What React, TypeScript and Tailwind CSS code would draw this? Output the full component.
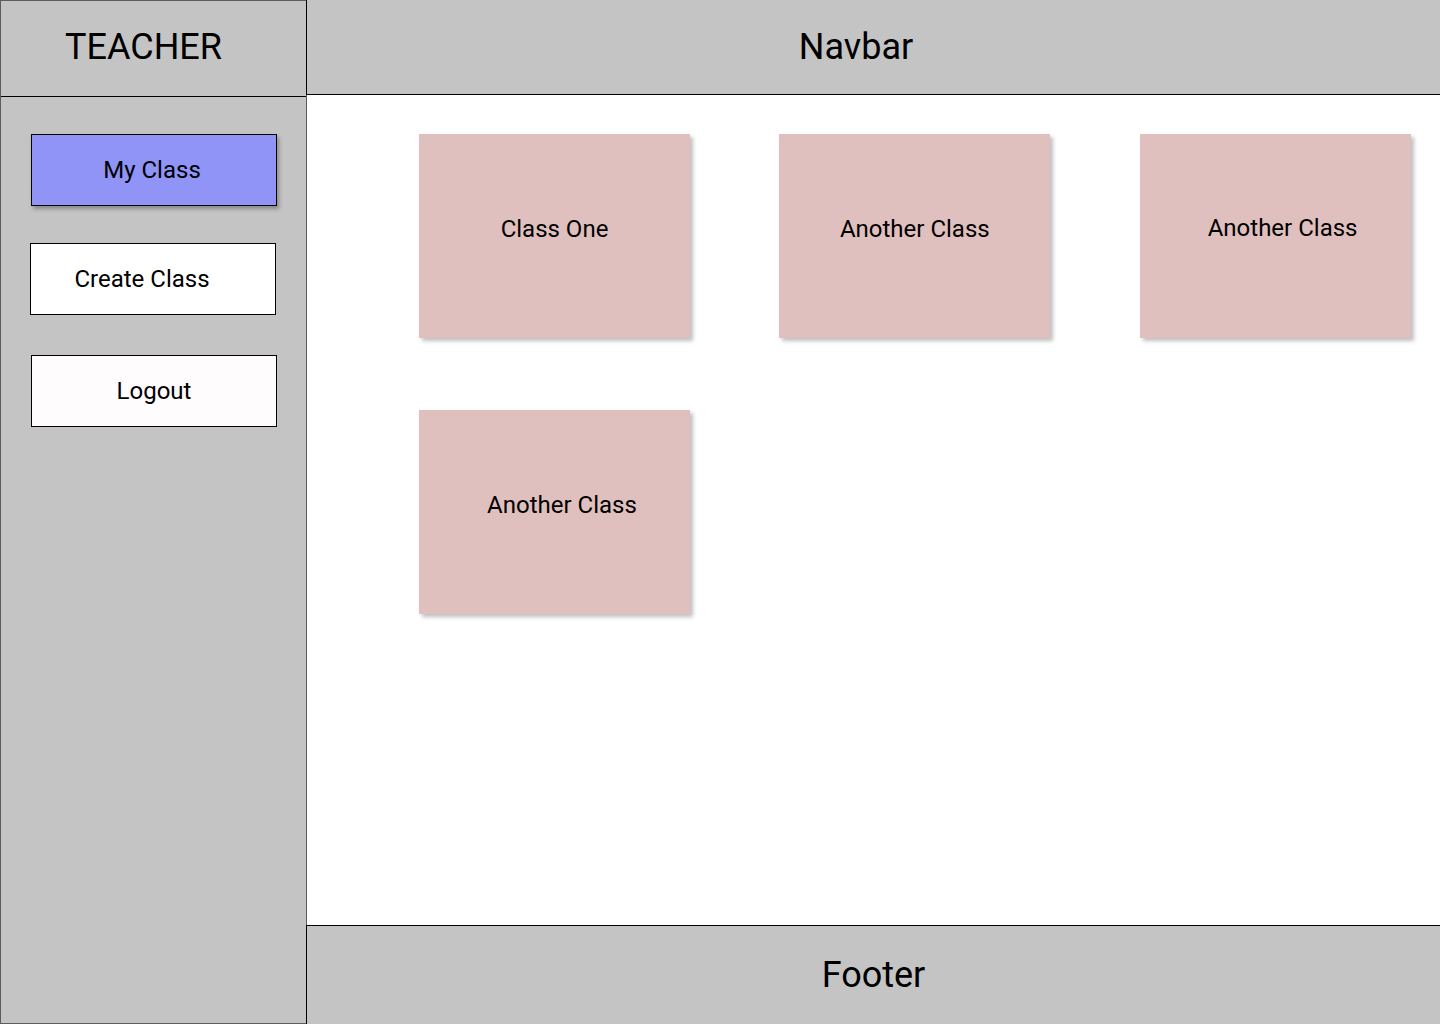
import React from "react";

const classes = [
  { name: "Class One", pad: "pb-[14px]" },
  { name: "Another Class", pad: "pb-[14px]" },
  { name: "Another Class", pad: "pb-[16px] pl-[15px]" },
  { name: "Another Class", pad: "pb-[15px] pl-[15px]" },
];

const SideButton = ({
  label,
  className,
}: {
  label: string;
  className: string;
}) => (
  <button
    className={`h-[72px] w-[246px] border border-black text-[24px] text-black ${className}`}
  >
    {label}
  </button>
);

const App = () => (
  <div className="flex h-[1024px] w-[1440px] overflow-hidden bg-white font-['Roboto',sans-serif] text-black">
    <aside className="flex w-[306px] flex-col border-l border-t border-b border-[#5c5c5c] bg-[#c4c4c4]">
      <div className="flex h-[96px] items-center border-b border-black pb-[4px] pl-[64px] text-[36px]">
        TEACHER
      </div>
      <div className="flex flex-col pt-[37px]">
        <SideButton
          label="My Class"
          className="ml-[30px] bg-[#8f94f6] pr-[4px] shadow-[2px_3px_4px_rgba(0,0,0,0.3)]"
        />
        <SideButton
          label="Create Class"
          className="ml-[29px] mt-[37px] bg-white pr-[22px]"
        />
        <SideButton
          label="Logout"
          className="ml-[30px] mt-[40px] bg-[#fffcfd]"
        />
      </div>
    </aside>

    <div className="flex flex-1 flex-col">
      <header className="flex h-[95px] items-center justify-center border-b border-l border-black bg-[#c4c4c4] pr-[35px] text-[36px]">
        Navbar
      </header>

      <main className="flex-1 border-l border-[#5c5c5c] pl-[112px] pt-[39px]">
        <div className="grid grid-cols-[271px_271px_271px] gap-x-[89.3px] gap-y-[72px]">
          {classes.map((c, i) => (
            <div
              key={i}
              className={`flex h-[204px] items-center justify-center bg-[#e0c0bf] text-[24px] shadow-[3px_3px_4px_rgba(0,0,0,0.25)] ${c.pad}`}
            >
              {c.name}
            </div>
          ))}
        </div>
      </main>

      <footer className="flex h-[99px] items-center justify-center border-l border-t border-black bg-[#c4c4c4] text-[36px]">
        Footer
      </footer>
    </div>
  </div>
);

export default App;
